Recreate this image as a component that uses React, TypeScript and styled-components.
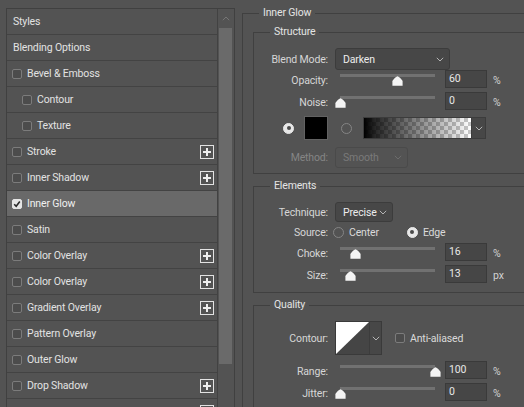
import React from "react";
import styled, { createGlobalStyle } from "styled-components";

const Global = createGlobalStyle`
  html, body { margin: 0; padding: 0; background: #535353; overflow: hidden; }
  body { font-family: Roboto, "Liberation Sans", Arial, sans-serif; font-size: 10.5px; letter-spacing: -0.15px; color: #dcdcdc; }
  * { box-sizing: border-box; }
`;

const Page = styled.div`
  display: flex;
  align-items: flex-start;
  width: 524px;
  height: 407px;
  overflow: hidden;
  background: #535353;
`;

/* ---------- left: styles list ---------- */

const StylesPanel = styled.div`
  flex: none;
  display: flex;
  margin: 8px 0 0 6px;
  width: 229px;
  height: 430px;
  border: 1px solid #404040;
  padding-right: 1px;
`;

const StyleList = styled.div`
  width: 211px;
  border-right: 1px solid #424242;
  display: flex;
  flex-direction: column;
`;

const StyleRow = styled.div<{ $selected?: boolean; $pad: number }>`
  flex: none;
  height: 26px;
  display: flex;
  align-items: center;
  padding: 0 3px 0 ${(p) => p.$pad}px;
  border-bottom: 1px solid #434343;
  background: ${(p) => (p.$selected ? "#696969" : "transparent")};
  color: ${(p) => (p.$selected ? "#f0f0f0" : "#e2e2e2")};
  white-space: nowrap;
`;

const CheckBox = styled.span<{ $checked?: boolean }>`
  flex: none;
  width: 10px;
  height: 10px;
  border-radius: 2px;
  margin-right: 5px;
  border: 1px solid ${(p) => (p.$checked ? "#e6e6e6" : "#7c7c7c")};
  background: ${(p) => (p.$checked ? "#e6e6e6" : "#4c4c4c")};
  display: flex;
  align-items: center;
  justify-content: center;
`;

const PlusIcon = styled.svg`
  flex: none;
  margin-left: auto;
`;

const ScrollBar = styled.div`
  width: 15px;
  display: flex;
  flex-direction: column;
  align-items: center;
`;

const ScrollArrow = styled.div`
  height: 19px;
  display: flex;
  align-items: center;
  justify-content: center;
  color: #767676;
`;

const ScrollThumb = styled.div`
  width: 13px;
  height: 336px;
  background: #6a6a6a;
`;

/* ---------- right: effect settings ---------- */

const EffectGroup = styled.fieldset`
  flex: none;
  margin: 6px 0 0 7px;
  padding: 0 0 0 10px;
  width: 330px;
  height: 430px;
  border: 1px solid #404040;
  min-width: 0;
`;

const SubGroup = styled.fieldset`
  margin: 5px 0 0 0;
  padding: 0;
  border: 1px solid #404040;
  min-width: 0;
`;

const Legend = styled.legend<{ $ml: number }>`
  margin-left: ${(p) => p.$ml}px;
  padding: 0 4px;
  line-height: 14px;
  font-size: 10.5px;
  color: #e4e4e4;
`;

const GroupBody = styled.div<{ $pt: number; $pb: number }>`
  display: flex;
  flex-direction: column;
  padding: ${(p) => p.$pt}px 0 ${(p) => p.$pb}px 0;
`;

const Row = styled.div<{ $h: number; $mt?: number; $pl?: number }>`
  display: flex;
  align-items: center;
  height: ${(p) => p.$h}px;
  margin-top: ${(p) => p.$mt ?? 0}px;
  padding-left: ${(p) => p.$pl ?? 0}px;
  white-space: nowrap;
`;

const Label = styled.span<{ $dim?: boolean }>`
  flex: none;
  width: 74px;
  margin-right: 7px;
  text-align: right;
  color: ${(p) => (p.$dim ? "#858585" : "#d6d6d6")};
`;

const Select = styled.div<{ $w: number; $h: number; $disabled?: boolean }>`
  flex: none;
  display: flex;
  align-items: center;
  justify-content: space-between;
  width: ${(p) => p.$w}px;
  height: ${(p) => p.$h}px;
  padding: 0 5px 0 7px;
  border-radius: 3px;
  border: 1px solid ${(p) => (p.$disabled ? "#4a4a4a" : "#3c3c3c")};
  background: ${(p) => (p.$disabled ? "#535353" : "#474747")};
  color: ${(p) => (p.$disabled ? "#7a7a7a" : "#ececec")};
`;

const ChevronSvg = styled.svg<{ $dim?: boolean }>`
  flex: none;
  color: ${(p) => (p.$dim ? "#6c6c6c" : "#b4b4b4")};
`;

const SliderBox = styled.div`
  flex: none;
  align-self: flex-start;
  width: 105px;
  height: 20px;
  padding: 4px 5px 0;
`;

const Track = styled.div`
  position: relative;
  height: 3px;
  background: #717171;
`;

const Thumb = styled.svg`
  position: absolute;
  top: 2px;
`;

const NumField = styled.div`
  flex: none;
  align-self: flex-start;
  width: 42px;
  height: 18px;
  margin-left: 5px;
  padding-left: 3px;
  line-height: 16px;
  background: #464646;
  border: 1px solid #3a3a3a;
  color: #e8e8e8;
`;

const Unit = styled.span`
  margin-left: 6px;
  color: #d2d2d2;
`;

const Radio = styled.span<{ $on?: boolean; $ml?: number }>`
  flex: none;
  width: 11px;
  height: 11px;
  margin-left: ${(p) => p.$ml ?? 0}px;
  border-radius: 50%;
  border: 1px solid ${(p) => (p.$on ? "#e8e8e8" : "#858585")};
  background: ${(p) => (p.$on ? "#e8e8e8" : "transparent")};
  display: flex;
  align-items: center;
  justify-content: center;
  &::after {
    content: "";
    display: ${(p) => (p.$on ? "block" : "none")};
    width: 4px;
    height: 4px;
    border-radius: 50%;
    background: #4a4a4a;
  }
`;

const Text = styled.span<{ $ml?: number }>`
  margin-left: ${(p) => p.$ml ?? 0}px;
  color: #dadada;
`;

const Swatch = styled.div`
  flex: none;
  width: 24px;
  height: 24px;
  margin-left: 10px;
  background: #000;
  border: 1px solid #626262;
`;

const GradientPicker = styled.div`
  flex: none;
  display: flex;
  width: 123px;
  height: 22px;
  margin-left: 11px;
  border: 1px solid #3c3c3c;
`;

const GradientBar = styled.div`
  flex: 1;
  background-color: #fff;
  background-image: linear-gradient(to right, #000 0%, rgba(0, 0, 0, 0.85) 10%, rgba(0, 0, 0, 0) 100%),
    linear-gradient(45deg, #c8c8c8 25%, transparent 25%),
    linear-gradient(-45deg, #c8c8c8 25%, transparent 25%),
    linear-gradient(45deg, transparent 75%, #c8c8c8 75%),
    linear-gradient(-45deg, transparent 75%, #c8c8c8 75%);
  background-size: 100% 100%, 8px 8px, 8px 8px, 8px 8px, 8px 8px;
  background-position: 0 0, 0 0, 0 4px, 4px -4px, -4px 0;
`;

const ArrowPart = styled.div<{ $w: number }>`
  flex: none;
  width: ${(p) => p.$w}px;
  display: flex;
  align-items: center;
  justify-content: center;
  background: #474747;
  border-left: 1px solid #3c3c3c;
`;

const ContourPicker = styled.div`
  flex: none;
  display: flex;
  width: 47px;
  height: 34px;
  border: 1px solid #3a3a3a;
`;

const ContourThumb = styled.svg`
  flex: none;
  display: block;
`;

const SmallCheck = styled.span<{ $ml: number }>`
  flex: none;
  width: 10px;
  height: 10px;
  margin-left: ${(p) => p.$ml}px;
  border-radius: 2px;
  border: 1px solid #7c7c7c;
  background: #4c4c4c;
`;

/* ---------- parts ---------- */

const Chevron = ({ dim }: { dim?: boolean }) => (
  <ChevronSvg $dim={dim} width="8" height="5" viewBox="0 0 8 5">
    <path d="M0.8 0.8 L4 4 L7.2 0.8" fill="none" stroke="currentColor" strokeWidth="1" />
  </ChevronSvg>
);

const Plus = () => (
  <PlusIcon width="14" height="14" viewBox="0 0 14 14">
    <rect x="0.5" y="0.5" width="13" height="13" fill="none" stroke="#e2e2e2" strokeWidth="1" />
    <path d="M7 3 V11 M3 7 H11" stroke="#ededed" strokeWidth="2" />
  </PlusIcon>
);

const Slider = ({ value }: { value: number }) => (
  <SliderBox>
    <Track>
      <Thumb width="11" height="10" viewBox="0 0 11 10" style={{ left: `calc(${value}% - 5.5px)` }}>
        <path d="M5.5 0.3 C6.6 0.3 10.6 4.2 10.6 5.4 V9.8 H0.4 V5.4 C0.4 4.2 4.4 0.3 5.5 0.3 Z" fill="#f4f4f4" />
      </Thumb>
    </Track>
  </SliderBox>
);

const SliderRow = ({ label, pos, value, unit, mt }: { label: string; pos: number; value: string; unit: string; mt?: number }) => (
  <Row $h={20} $mt={mt}>
    <Label>{label}</Label>
    <Slider value={pos} />
    <NumField>{value}</NumField>
    <Unit>{unit}</Unit>
  </Row>
);

type StyleItem = { label: string; pad: number; check?: boolean; checked?: boolean; plus?: boolean; selected?: boolean };

const styleItems: StyleItem[] = [
  { label: "Styles", pad: 6 },
  { label: "Blending Options", pad: 6 },
  { label: "Bevel & Emboss", pad: 5, check: true },
  { label: "Contour", pad: 15, check: true },
  { label: "Texture", pad: 15, check: true },
  { label: "Stroke", pad: 5, check: true, plus: true },
  { label: "Inner Shadow", pad: 5, check: true, plus: true },
  { label: "Inner Glow", pad: 5, check: true, checked: true, selected: true },
  { label: "Satin", pad: 5, check: true },
  { label: "Color Overlay", pad: 5, check: true, plus: true },
  { label: "Color Overlay", pad: 5, check: true, plus: true },
  { label: "Gradient Overlay", pad: 5, check: true, plus: true },
  { label: "Pattern Overlay", pad: 5, check: true },
  { label: "Outer Glow", pad: 5, check: true },
  { label: "Drop Shadow", pad: 5, check: true, plus: true },
  { label: "Drop Shadow", pad: 5, check: true, plus: true },
];

export default function App() {
  return (
    <>
      <Global />
      <Page>
        <StylesPanel>
          <StyleList>
            {styleItems.map((it, i) => (
              <StyleRow key={i} $pad={it.pad} $selected={it.selected}>
                {it.check && (
                  <CheckBox $checked={it.checked}>
                    {it.checked && (
                      <svg width="8" height="8" viewBox="0 0 8 8">
                        <path d="M1.2 4.2 L3.2 6.2 L6.8 1.6" fill="none" stroke="#2a2a2a" strokeWidth="1.6" />
                      </svg>
                    )}
                  </CheckBox>
                )}
                <span>{it.label}</span>
                {it.plus && <Plus />}
              </StyleRow>
            ))}
          </StyleList>
          <ScrollBar>
            <ScrollArrow>
              <svg width="8" height="5" viewBox="0 0 8 5">
                <path d="M0.8 4.2 L4 1 L7.2 4.2" fill="none" stroke="currentColor" strokeWidth="1" />
              </svg>
            </ScrollArrow>
            <ScrollThumb />
          </ScrollBar>
        </StylesPanel>

        <EffectGroup>
          <Legend $ml={6}>Inner Glow</Legend>

          <SubGroup>
            <Legend $ml={16}>Structure</Legend>
            <GroupBody $pt={9} $pb={5}>
              <Row $h={22}>
                <Label>Blend Mode:</Label>
                <Select $w={115} $h={22}>
                  <span>Darken</span>
                  <Chevron />
                </Select>
              </Row>
              <SliderRow label="Opacity:" pos={60} value="60" unit="%" />
              <SliderRow label="Noise:" pos={0} value="0" unit="%" mt={2} />
              <Row $h={24} $mt={4} $pl={29}>
                <Radio $on />
                <Swatch />
                <Radio $ml={13} />
                <GradientPicker>
                  <GradientBar />
                  <ArrowPart $w={14}>
                    <Chevron />
                  </ArrowPart>
                </GradientPicker>
              </Row>
              <Row $h={21} $mt={7}>
                <Label $dim>Method:</Label>
                <Select $w={73} $h={21} $disabled>
                  <span>Smooth</span>
                  <Chevron dim />
                </Select>
              </Row>
            </GroupBody>
          </SubGroup>

          <SubGroup>
            <Legend $ml={16}>Elements</Legend>
            <GroupBody $pt={9} $pb={7}>
              <Row $h={20}>
                <Label>Technique:</Label>
                <Select $w={58} $h={20}>
                  <span>Precise</span>
                  <Chevron />
                </Select>
              </Row>
              <Row $h={18} $mt={1}>
                <Label>Source:</Label>
                <Radio $ml={-2} />
                <Text $ml={5}>Center</Text>
                <Radio $on $ml={28} />
                <Text $ml={5}>Edge</Text>
              </Row>
              <SliderRow label="Choke:" pos={16} value="16" unit="%" mt={2} />
              <SliderRow label="Size:" pos={11} value="13" unit="px" mt={2} />
            </GroupBody>
          </SubGroup>

          <SubGroup>
            <Legend $ml={16}>Quality</Legend>
            <GroupBody $pt={9} $pb={8}>
              <Row $h={34}>
                <Label>Contour:</Label>
                <ContourPicker>
                  <ContourThumb width="33" height="32" viewBox="0 0 33 32">
                    <rect x="0" y="0" width="33" height="32" fill="#454545" />
                    <polygon points="0,0 33,0 0,32" fill="#ffffff" />
                  </ContourThumb>
                  <ArrowPart $w={12}>
                    <Chevron />
                  </ArrowPart>
                </ContourPicker>
                <SmallCheck $ml={13} />
                <Text $ml={5}>Anti-aliased</Text>
              </Row>
              <SliderRow label="Range:" pos={100} value="100" unit="%" mt={6} />
              <SliderRow label="Jitter:" pos={0} value="0" unit="%" mt={2} />
            </GroupBody>
          </SubGroup>
        </EffectGroup>
      </Page>
    </>
  );
}
